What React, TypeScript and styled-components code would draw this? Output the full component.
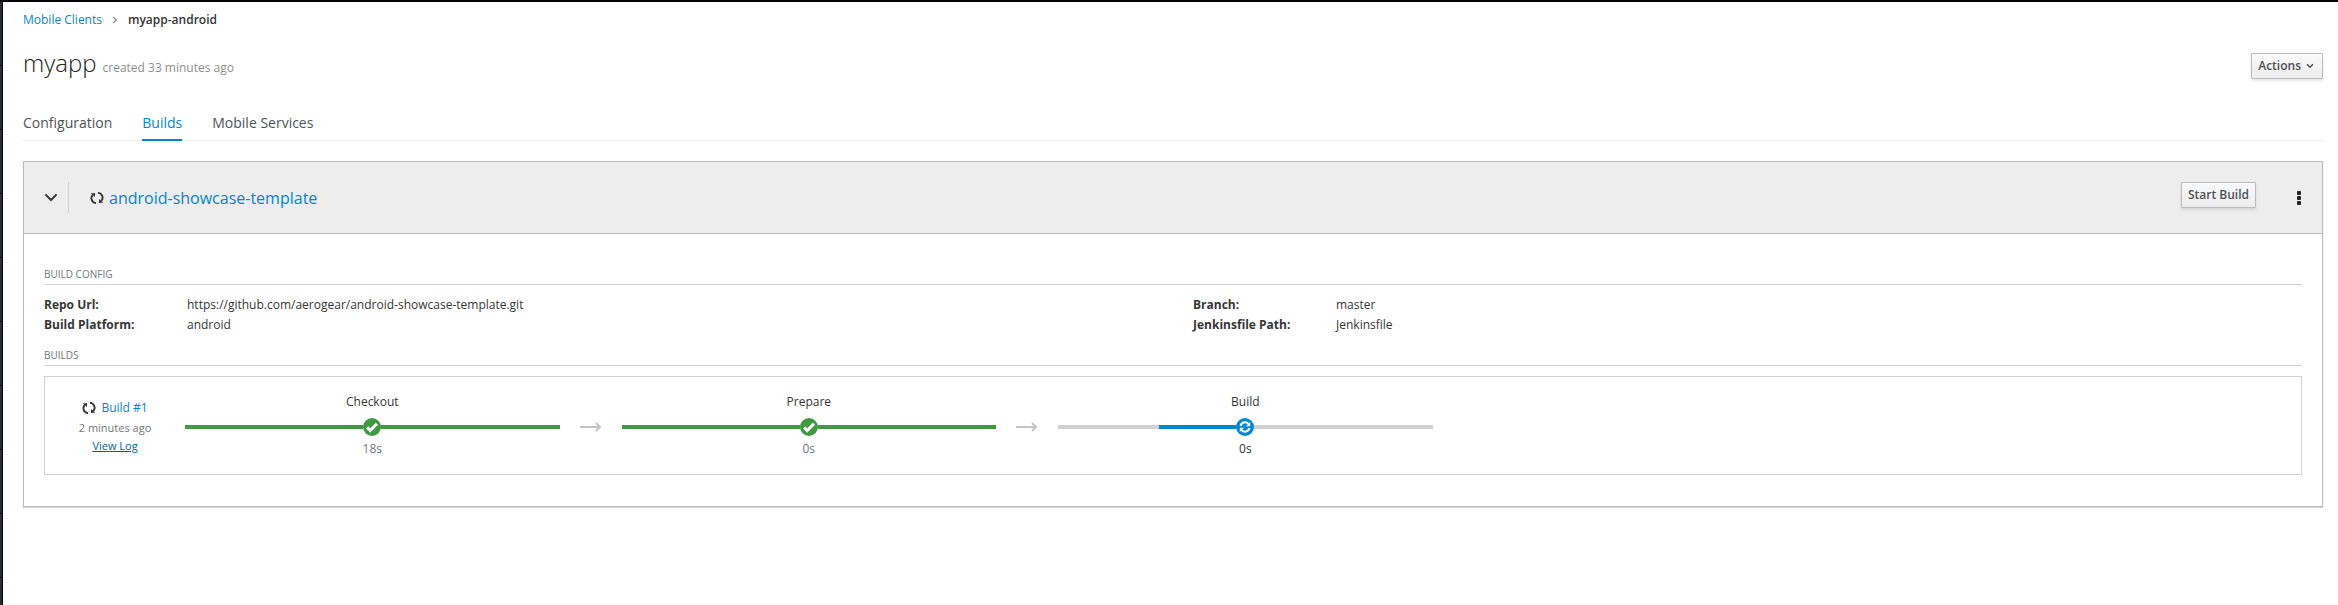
import React from "react";
import styled, { createGlobalStyle } from "styled-components";

const GlobalStyle = createGlobalStyle`
  * { box-sizing: border-box; }
  html { height: 100%; }
  body {
    margin: 0;
    min-height: 100%;
    display: flex;
    background: #fff;
    color: #363636;
    font-family: "Open Sans", sans-serif;
    font-size: 12px;
    line-height: 20px;
  }
  #root { flex: 1; display: flex; min-width: 0; }
  a { color: #0088ce; text-decoration: none; }
  ul, ol, dl, dd, h1, h2, h3, p { margin: 0; padding: 0; }
  ul, ol { list-style: none; }
`;

const Frame = styled.div`
  flex: 1;
  min-width: 0;
  display: flex;
  border-top: 2px solid #030308;
`;

const NavEdge = styled.div`
  flex: none;
  width: 3px;
  border-right: 1px solid #030308;
  background: repeating-linear-gradient(#292e34 0 63px, #030308 63px 64px);
`;

const Page = styled.main`
  flex: 1;
  min-width: 0;
  padding: 8px 15px 40px 20px;
`;

const Breadcrumb = styled.ol`
  display: flex;
  align-items: center;
`;

const Crumb = styled.li`
  display: flex;
  align-items: center;
  font-weight: 600;
  a { font-weight: 400; }
`;

const CrumbArrow = styled.svg`
  width: 6px;
  height: 8px;
  margin: 0 10px;
`;

const TitleRow = styled.header`
  display: flex;
  justify-content: space-between;
  align-items: flex-start;
  margin-top: 17px;
`;

const Title = styled.h1`
  color: #222;
  font-size: 24px;
  line-height: 32px;
  font-weight: 300;
  small {
    margin-left: 6px;
    font-size: 12px;
    line-height: 12px;
    font-weight: 400;
    color: #8f8f8f;
  }
`;

const Button = styled.button`
  display: flex;
  align-items: center;
  gap: 5px;
  height: 26px;
  padding: 0 6px;
  border: 1px solid #bbb;
  border-radius: 1px;
  background: linear-gradient(#fafafa, #ededed);
  box-shadow: 0 2px 3px rgba(3, 3, 3, 0.1);
  color: #4d5258;
  font: 600 12px/20px "Open Sans", sans-serif;
`;

const ActionsButton = styled(Button)`
  margin-top: 6px;
  padding-right: 8px;
`;

const StartButton = styled(Button)`
  margin-bottom: 5px;
`;

const Tabs = styled.nav`
  display: flex;
  gap: 30px;
  margin-top: 32px;
  border-bottom: 1px solid #ededed;
`;

const Tab = styled.a<{ $active?: boolean }>`
  margin-bottom: -1px;
  padding-bottom: 4px;
  border-bottom: 2px solid ${(p) => (p.$active ? "#0088ce" : "transparent")};
  color: ${(p) => (p.$active ? "#0088ce" : "#4d5258")};
  font-size: 14px;
  line-height: 24px;
`;

const Card = styled.section`
  margin-top: 20px;
  border: 1px solid #bbb;
  box-shadow: 0 1px 1px rgba(3, 3, 3, 0.18);
`;

const CardHeader = styled.header`
  display: flex;
  align-items: center;
  height: 72px;
  padding: 0 20px;
  border-bottom: 1px solid #bbb;
  background: #ededed;
`;

const IconButton = styled.button`
  display: flex;
  align-items: center;
  justify-content: center;
  padding: 0;
  border: 0;
  background: none;
`;

const Expander = styled(IconButton)`
  height: 31px;
  padding-right: 10px;
  border-right: 1px solid #d1d1d1;
`;

const CardTitle = styled.h2`
  flex: 1;
  display: flex;
  align-items: center;
  gap: 5px;
  margin-left: 21px;
  font-size: 16px;
  line-height: 24px;
  font-weight: 400;
`;

const Kebab = styled(IconButton)`
  width: 6px;
  height: 24px;
  margin-left: 40px;
`;

const CardBody = styled.div`
  padding: 30px 20px 31px;
`;

const SectionTitle = styled.h3`
  border-bottom: 1px solid #d1d1d1;
  color: #72767b;
  font-size: 10px;
  line-height: 20px;
  font-weight: 400;
  text-transform: uppercase;
`;

const ConfigGrid = styled.div`
  display: grid;
  grid-template-columns: 1fr 1fr;
  gap: 40px;
  margin: 10px 0;
`;

const Details = styled.dl`
  display: grid;
  grid-template-columns: 143px 1fr;
  dt { font-weight: 700; }
`;

const BuildRow = styled.article`
  display: flex;
  align-items: flex-start;
  margin-top: 10px;
  padding: 15px 0;
  border: 1px solid #d1d1d1;
`;

const Summary = styled.div`
  flex: none;
  width: 140px;
  padding-top: 6px;
  display: flex;
  flex-direction: column;
  align-items: center;
`;

const BuildName = styled.div`
  display: flex;
  align-items: center;
  gap: 5px;
`;

const Age = styled.span`
  color: #72767b;
  font-size: 11px;
`;

const LogLink = styled.a`
  color: #00659c;
  font-size: 11px;
  line-height: 16px;
  text-decoration: underline;
`;

const Stages = styled.ol`
  flex: 1;
  display: flex;
`;

const Stage = styled.li`
  flex: none;
  width: 17.7%;
  display: flex;
  flex-direction: column;
  align-items: center;
`;

const StageTime = styled.span<{ $muted: boolean }>`
  color: ${(p) => (p.$muted ? "#72767b" : "#363636")};
`;

const Track = styled.div`
  align-self: stretch;
  display: flex;
  align-items: center;
  height: 18px;
  margin: 6px 0 3px;
`;

const trackColors = {
  done: ["#409a42", "#409a42"],
  running: ["linear-gradient(90deg, #d1d1d1 57%, #0088ce 57%)", "#d1d1d1"],
};

const TrackHalf = styled.span<{ $fill: string }>`
  flex: 1;
  height: 4px;
  background: ${(p) => p.$fill};
`;

const ArrowItem = styled.li`
  flex: none;
  width: 62px;
  height: 18px;
  margin-top: 26px;
  display: flex;
  align-items: center;
  justify-content: center;
`;

const Refresh = () => (
  <svg width="14" height="14" viewBox="0 0 14 14" aria-hidden="true">
    <g fill="none" stroke="#363636" strokeWidth="1.9">
      <path d="M6 12.1A4.700 4.700 0 0 1 2.700 4.200" />
      <path d="M8 1.900A4.700 4.700 0 0 1 11.300 9.800" />
    </g>
    <path d="M.6 2.500L5.100 1.900 4.900 6zM13.400 11.500L8.900 12.100 9.100 8z" fill="#363636" />
  </svg>
);

const DoneIcon = () => (
  <svg width="18" height="18" viewBox="0 0 18 18" aria-label="Complete">
    <circle cx="9" cy="9" r="9" fill="#409a42" />
    <path d="M4.2 9.4l3 3.1 6.7-6.8" fill="none" stroke="#fff" strokeWidth="3" />
  </svg>
);

const RunningIcon = () => (
  <svg width="18" height="18" viewBox="0 0 18 18" aria-label="Running">
    <circle cx="9" cy="9" r="9" fill="#0088ce" />
    <g fill="none" stroke="#fff" strokeWidth="2">
      <path d="M4.500 8A4.600 4.600 0 0 1 12.400 5.900" />
      <path d="M13.500 10A4.600 4.600 0 0 1 5.600 12.100" />
    </g>
    <path d="M14.200 3.900V8.200H9.900zM3.800 14.100V9.800H8.100z" fill="#fff" />
  </svg>
);

const Arrow = () => (
  <svg width="22" height="10" viewBox="0 0 22 10" fill="none" stroke="#c4c4c4" strokeWidth="2" aria-hidden="true">
    <path d="M0 5h20M16 1l4 4-4 4" />
  </svg>
);

type StageState = "done" | "running";

const stages: { name: string; time: string; state: StageState }[] = [
  { name: "Checkout", time: "18s", state: "done" },
  { name: "Prepare", time: "0s", state: "done" },
  { name: "Build", time: "0s", state: "running" },
];

export default function App() {
  return (
    <Frame>
      <GlobalStyle />
      <NavEdge />
      <Page>
        <Breadcrumb>
          <Crumb>
            <a href="#clients">Mobile Clients</a>
            <CrumbArrow viewBox="0 0 6 8" fill="none" stroke="#8b8d8f" strokeWidth="1.4">
              <path d="M1.2 1l3 3-3 3" />
            </CrumbArrow>
          </Crumb>
          <Crumb aria-current="page">myapp-android</Crumb>
        </Breadcrumb>

        <TitleRow>
          <Title>
            myapp<small>created 33 minutes ago</small>
          </Title>
          <ActionsButton type="button">
            Actions
            <svg width="8" height="6" viewBox="0 0 8 6" fill="none" stroke="#4d5258" strokeWidth="1.5">
              <path d="M1 1.2l3 3 3-3" />
            </svg>
          </ActionsButton>
        </TitleRow>

        <Tabs>
          <Tab href="#configuration">Configuration</Tab>
          <Tab href="#builds" $active>Builds</Tab>
          <Tab href="#services">Mobile Services</Tab>
        </Tabs>

        <Card>
          <CardHeader>
            <Expander type="button" aria-label="Collapse">
              <svg width="14" height="10" viewBox="0 0 14 10" fill="none" stroke="#363636" strokeWidth="2">
                <path d="M1.4 1.4L7 7l5.6-5.6" />
              </svg>
            </Expander>
            <CardTitle>
              <Refresh />
              <a href="#template">android-showcase-template</a>
            </CardTitle>
            <StartButton type="button">Start Build</StartButton>
            <Kebab type="button" aria-label="More actions">
              <svg width="4" height="14" viewBox="0 0 4 14" fill="#222">
                <rect width="4" height="4" rx="1" />
                <rect y="5" width="4" height="4" rx="1" />
                <rect y="10" width="4" height="4" rx="1" />
              </svg>
            </Kebab>
          </CardHeader>
          <CardBody>
            <SectionTitle>Build Config</SectionTitle>
            <ConfigGrid>
              <Details>
                <dt>Repo Url:</dt>
                <dd>https://github.com/aerogear/android-showcase-template.git</dd>
                <dt>Build Platform:</dt>
                <dd>android</dd>
              </Details>
              <Details>
                <dt>Branch:</dt>
                <dd>master</dd>
                <dt>Jenkinsfile Path:</dt>
                <dd>Jenkinsfile</dd>
              </Details>
            </ConfigGrid>
            <SectionTitle>Builds</SectionTitle>
            <BuildRow>
              <Summary>
                <BuildName>
                  <Refresh />
                  <a href="#build-1">Build #1</a>
                </BuildName>
                <Age>2 minutes ago</Age>
                <LogLink href="#log">View Log</LogLink>
              </Summary>
              <Stages>
                {stages.map((s, i) => (
                  <React.Fragment key={s.name}>
                    {i > 0 && (
                      <ArrowItem>
                        <Arrow />
                      </ArrowItem>
                    )}
                    <Stage>
                      <span>{s.name}</span>
                      <Track>
                        <TrackHalf $fill={trackColors[s.state][0]} />
                        {s.state === "done" ? <DoneIcon /> : <RunningIcon />}
                        <TrackHalf $fill={trackColors[s.state][1]} />
                      </Track>
                      <StageTime $muted={s.state === "done"}>{s.time}</StageTime>
                    </Stage>
                  </React.Fragment>
                ))}
              </Stages>
            </BuildRow>
          </CardBody>
        </Card>
      </Page>
    </Frame>
  );
}
